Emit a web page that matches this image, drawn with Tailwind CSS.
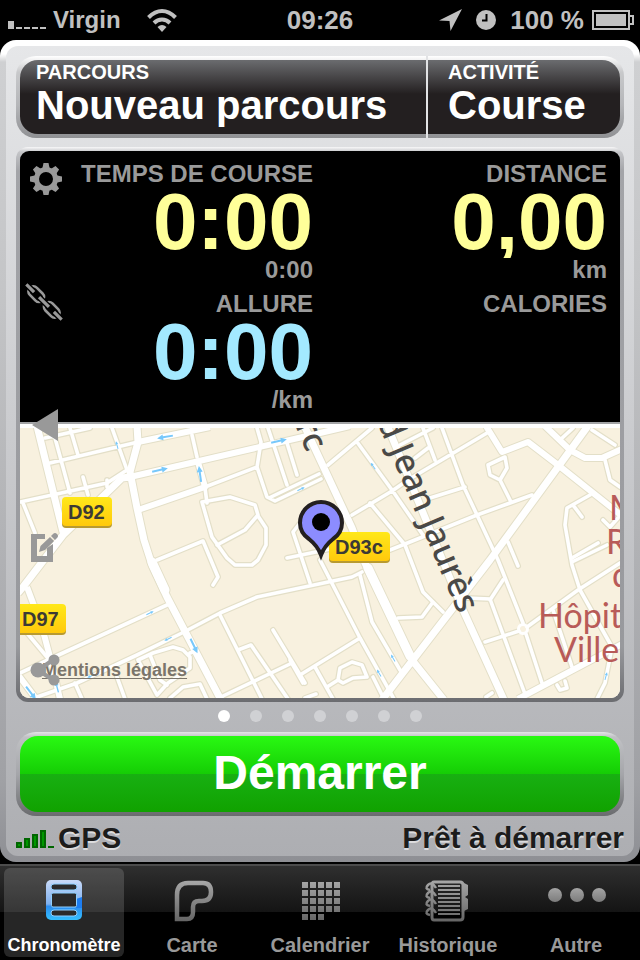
<!DOCTYPE html>
<html lang="fr">
<head>
  <meta charset="UTF-8" />
  <meta name="viewport" content="width=device-width, initial-scale=1.0"/>
  <title>Chronomètre</title>
  <script src="https://cdn.jsdelivr.net/npm/@tailwindcss/browser@4"></script>
</head>
<body class="min-h-screen flex flex-col bg-black font-['Liberation_Sans',Arial,sans-serif] font-bold">

  <!-- Status bar -->
  <header class="h-10 grid grid-cols-[1fr_auto_1fr] items-center px-2 text-[26px] text-[#c0c0c0]">
    <div class="flex items-center">
      <svg class="w-[38px] h-5 mr-[7px]" viewBox="0 0 38 20" fill="#c0c0c0">
        <path d="M0 11h6v8H0zM8 17h6v2H8zM16 17h6v2h-6zM24 17h6v2h-6zM32 17h6v2h-6z"/>
      </svg>
      <span class="text-2xl">Virgin</span>
      <svg class="w-[30px] h-6 ml-[26px]" viewBox="0 0 30 24" fill="none" stroke="#c0c0c0" stroke-width="4">
        <path d="M1.500 9.500Q8 3 15 3T28.500 9.500"/>
        <path d="M7 15Q10.500 11.500 15 11.500T23 15"/>
        <path d="M10.500 19Q15 15 19.500 19L15 24z" fill="#c0c0c0" stroke="none"/>
      </svg>
    </div>
    <span>09:26</span>
    <div class="flex items-center justify-end">
      <svg class="w-[23px] h-[22px] mr-3.5" viewBox="0 0 23 22" fill="#c0c0c0"><path d="M23 0L11.500 22L10.500 12L0 11.500z"/></svg>
      <svg class="w-5 h-5 mr-3.5" viewBox="0 0 20 20"><circle cx="10" cy="10" r="10" fill="#c0c0c0"/><path d="M10.500 4v6.500H6" fill="none" stroke="#000" stroke-width="2"/></svg>
      <span class="mr-2">100 %</span>
      <svg class="w-[42px] h-5 -mr-0.5" viewBox="0 0 42 20" fill="#c0c0c0">
        <path d="M1 1h36v18H1z" fill="none" stroke="#c0c0c0" stroke-width="2"/>
        <path d="M4 4h30v12H4z"/>
        <path d="M38 6h3v8h-3" fill="none" stroke="#c0c0c0" stroke-width="2"/>
      </svg>
    </div>
  </header>

  <main class="rounded-2xl p-1.5 bg-[linear-gradient(#fff_0,#fff_14px,#cfd0d2_22px,#c4c5c7_30%,#a0a1a5_90%,#8e8f94_100%)]">
    <div class="rounded-xl px-2.5 pt-2.5 bg-linear-to-b from-[#e6e7e9] to-[#adaeb2]">

      <!-- Route and activity -->
      <div class="relative rounded-[20px] p-1 bg-[linear-gradient(#fff_0,#c8c9cb_16px,#b5b6b9_60%,#8f9093_100%)]">
        <div class="flex h-[74px] rounded-[18px] overflow-hidden text-white bg-[linear-gradient(#6b6c6f,#231f20_46%)] [text-shadow:0_-2px_0_#000]">
          <button class="w-[408px] pl-4 pb-2 text-left">
            <span class="block text-xl leading-6">PARCOURS</span>
            <span class="block text-[40px] leading-[42px]">Nouveau parcours</span>
          </button>
          <button class="flex-1 pl-5 pb-2 text-left">
            <span class="block text-xl leading-6">ACTIVITÉ</span>
            <span class="block text-[40px] leading-[42px]">Course</span>
          </button>
        </div>
        <div class="absolute inset-y-0 left-[410px] w-0.5 bg-[#e2e3e5]"></div>
      </div>

      <!-- Stats and map -->
      <section class="relative mt-[9px] rounded-xl p-1 bg-[linear-gradient(#f8f8f9_0,#c4c5c8_5px,#a3a4a8_24px,#98999d_90%,#6b6c70_100%)]">
        <div class="rounded-[9px] overflow-hidden">
          <div class="grid grid-cols-2 bg-black pt-[11px] pb-2.5 text-right text-2xl text-[#9a9a9a]">
            <div class="pr-[7px]">
              <h2 class="leading-6">TEMPS DE COURSE</h2>
              <p class="text-[80px] leading-[72px] text-[#ffff99]">0:00</p>
              <p class="leading-6">0:00</p>
              <h2 class="leading-6 mt-2.5">ALLURE</h2>
              <p class="text-[80px] leading-[72px] text-[#a3e9ff]">0:00</p>
              <p class="leading-6">/km</p>
            </div>
            <div class="pr-[13px]">
              <h2 class="leading-6">DISTANCE</h2>
              <p class="text-[80px] leading-[72px] overflow-hidden text-[#ffff99]">0,00</p>
              <p class="leading-6">km</p>
              <h2 class="leading-6 mt-2.5">CALORIES</h2>
            </div>
          </div>

          <div class="relative border-t-2 border-[#a3a4a6] bg-white pt-1">
            <svg class="block w-full h-[270px]" viewBox="20 428 600 270" preserveAspectRatio="xMidYMid slice">
              <defs>
                <linearGradient id="badge" x1="0" y1="0" x2="0" y2="1"><stop offset="0" stop-color="#ffe81a"/><stop offset="1" stop-color="#ffc90c"/></linearGradient>
                <g id="streets" fill="none" stroke-linejoin="round" stroke-linecap="round">
                  <path d="M45 438L90 428M70 428L78 455M55 438L70 493M112 428L127 470M20 502L107 483L127 470M83 477L88 495M107 480V487M23 503L35 533M50 463L138 442M192 435L197 457M205 487L257 467M205 488L207 503M257 428L261 442L257 467L267 497L275 501L321 479M271 497L319 474M268 428L287 485M287 443L297 475"/>
                  <path d="M202 502L230 497L255 505L258 515L245 530L217 545M202 502L212 537L227 558L235 565H252L258 560L266 545V528L258 516M157 560L203 541L218 577L213 585M300 523L293 532L310 583M287 558L330 549L390 550L405 544L477 515L532 495"/>
                  <path d="M167 605L52 658L20 673M37 697L77 683L137 655L182 633L220 613L257 597L352 577L362 572M27 633L47 657M75 683L82 699M117 677L125 699M138 660L153 653L173 647L183 650L190 657V668L177 677L168 683L157 695L138 660M150 655L160 680L167 685M190 653L195 651M170 698L183 687L200 684L207 699"/>
                  <path d="M220 615L262 699M238 650L251 645L288 699M223 696L292 663M273 630L305 683M300 675L360 638M290 660L303 683M315 667L333 699M327 687L338 680L340 668L352 662L362 665L367 677L353 678L343 683L338 680M305 698L316 694M360 575L372 622L400 670M320 560L360 638L394 699M373 677L384 699"/>
                  <path d="M560 440L573 428M592 430L615 445M605 460L610 480L620 487M488 465L505 457L507 468L500 480L490 475zM500 480L511 502M442 428L463 485L498 560L523 623M526 634L542 683M423 428L435 460M400 445L433 428M415 458L428 448M413 477L487 433M430 498L465 487M328 465L372 428M357 442L392 490L423 535M352 515L392 491L405 482M370 503L405 545L423 592L443 612M398 618L422 617L433 602"/>
                  <path d="M508 542L518 566M590 495L567 508L565 525L572 565L580 590L612 647L605 683L597 699M573 505L582 517M572 558L598 543M572 562L607 545M603 520L610 527L618 518M620 563L578 590L527 627M519 631L485 642M490 600L503 580M467 598L490 599L525 694M553 610L572 667M486 697L492 693M557 685L560 690L567 688L565 681"/>
                </g>
                <g id="avenues" fill="none" stroke-linejoin="round">
                  <path stroke-width="6" d="M138 442L210 427M130 477L320 433L350 426M138 510L205 487L198 462M27 587L42 627L50 657L60 699M545 426L570 450L585 458H602L622 449M486 426L502 452L528 442L558 465L622 516M518 699L622 644M19 676L37 700"/>
                  <path stroke-width="7" d="M37 426L63 532M137 426L138 442L130 472L137 508L144 540L152 565L167 597L221 700M130 477L122 478L63 535L23 587L18 593M303 423L352 528L365 563L412 660L444 700M588 426L490 560L382 700M387 425L463 610L504 700"/>
                  <path stroke-width="9" stroke-linecap="round" d="M152 562L165 590M368 568L410 656"/>
                </g>
              </defs>
              <rect x="20" y="428" width="600" height="270" fill="#f8f1df"/>
              <g stroke="#e3dfc8"><use href="#streets" stroke-width="6"/></g>
              <g fill="none" stroke="#e3dfc8" stroke-linejoin="round">
                <path stroke-width="8" d="M138 442L210 427M130 477L320 433L350 426M138 510L205 487L198 462M27 587L42 627L50 657L60 699M545 426L570 450L585 458H602L622 449M486 426L502 452L528 442L558 465L622 516M518 699L622 644M19 676L37 700"/>
                <path stroke-width="9" d="M37 426L63 532M137 426L138 442L130 472L137 508L144 540L152 565L167 597L221 700M130 477L122 478L63 535L23 587L18 593M303 423L352 528L365 563L412 660L444 700M588 426L490 560L382 700M387 425L463 610L504 700"/>
                <path stroke-width="11" stroke-linecap="round" d="M152 562L165 590M368 568L410 656"/>
              </g>
              <circle cx="523" cy="629" r="4.500" fill="#f8f1df" stroke="#fff" stroke-width="3"/>
              <g stroke="#fff"><use href="#streets" stroke-width="3.600"/><use href="#avenues"/></g>

              <!-- one-way arrows -->
              <defs><path id="arrow" d="M-8 -1H2V-3L8 0L2 3V1H-8z"/></defs>
              <g fill="#77c8fb">
                <use href="#arrow" transform="translate(165 437) rotate(170)"/>
                <use href="#arrow" transform="translate(160 470) rotate(-12)"/>
                <use href="#arrow" transform="translate(279 441) rotate(-12)"/>
                <use href="#arrow" transform="translate(200 474) rotate(-98)"/>
                <use href="#arrow" transform="translate(117 445) rotate(-105) scale(.5)"/>
                <use href="#arrow" transform="translate(301 489) rotate(-25) scale(.5)"/>
                <use href="#arrow" transform="translate(150 613) rotate(-25) scale(.5)"/>
                <use href="#arrow" transform="translate(168 639) rotate(155) scale(.5)"/>
                <use href="#arrow" transform="translate(194 646) rotate(64)"/>
                <use href="#arrow" transform="translate(31 693) rotate(52)"/>
                <use href="#arrow" transform="translate(57 687) rotate(-105) scale(.7)"/>
                <use href="#arrow" transform="translate(91 676) rotate(155) scale(.5)"/>
                <use href="#arrow" transform="translate(373 466) rotate(-125) scale(.5)"/>
                <use href="#arrow" transform="translate(393 658) rotate(-120) scale(.5)"/>
                <use href="#arrow" transform="translate(379 673) rotate(-120) scale(.5)"/>
                <use href="#arrow" transform="translate(606 676) rotate(-75) scale(.5)"/>
              </g>

              <g class="font-['Noto_Sans',sans-serif] font-medium text-[34px]" fill="#4a4947">
                <text transform="translate(377 422) rotate(67)">d Jean Jaurès</text>
                <text transform="translate(295 425) rotate(67)">rc</text>
              </g>
              <g class="font-[Lato,sans-serif] font-normal text-[34px]" fill="#b85b58">
                <text x="609" y="520">M</text>
                <text x="606" y="554">R</text>
                <text x="612" y="587">d</text>
                <text x="538" y="628">Hôpit</text>
                <text x="554" y="662">Ville</text>
              </g>

              <g class="text-xl" fill="#3c3a35">
                <rect x="62" y="499" width="50" height="29" rx="4" fill="#b89a30"/>
                <rect x="62" y="497" width="50" height="29" rx="4" fill="url(#badge)"/>
                <text x="68" y="519">D92</text>
                <rect x="14" y="606" width="52" height="29" rx="4" fill="#b89a30"/>
                <rect x="14" y="604" width="52" height="29" rx="4" fill="url(#badge)"/>
                <text x="22" y="626">D97</text>
                <rect x="329" y="534" width="61" height="29" rx="4" fill="#b89a30"/>
                <rect x="329" y="532" width="61" height="29" rx="4" fill="url(#badge)"/>
                <text x="335" y="554">D93c</text>
              </g>
              <path d="M321 555C318 547 314 543 309 539C303 535 300 530 300 523A21 21 0 0 1 342 523C342 530 339 535 333 539C328 543 324 547 321 555z" fill="#8c8cff" stroke="#231f20" stroke-width="4"/>
              <circle cx="321" cy="522" r="9"/>
            </svg>
            <a href="#" class="absolute left-[22px] bottom-[18px] text-lg leading-5 text-[#7b756b] underline underline-offset-2 decoration-1">Mentions légales</a>
          </div>
        </div>

        <!-- Side shortcuts -->
        <div class="absolute left-3 top-4 h-[523px] flex flex-col justify-between">
          <button aria-label="Réglages" class="w-9 h-8">
            <svg class="w-9 h-8 overflow-visible" viewBox="0 0 36 32">
              <g fill="#999">
                <path id="teeth" d="M15.500 0H20.500L22 7H14zM15.500 32H20.500L22 25H14z"/>
                <use href="#teeth" transform="rotate(45 18 16)"/>
                <use href="#teeth" transform="rotate(90 18 16)"/>
                <use href="#teeth" transform="rotate(135 18 16)"/>
              </g>
              <circle cx="18" cy="16" r="9.500" fill="#000" stroke="#999" stroke-width="5"/>
            </svg>
          </button>
          <button aria-label="Capteurs" class="w-9 h-8">
            <svg class="w-9 h-8 overflow-visible" viewBox="0 0 36 32" fill="none" stroke="#999" stroke-width="2.600">
              <g transform="translate(0 -2) rotate(45 16 18)">
                <rect x="-4" y="13" width="18" height="10" rx="5"/>
                <rect x="18" y="13" width="18" height="10" rx="5"/>
                <path d="M-9 18H2M9 18H23M30 18H41" stroke="#000" stroke-width="6"/>
                <path d="M-9 18H2M9 18H23M30 18H41" stroke-width="3.200"/>
              </g>
            </svg>
          </button>
          <button aria-label="Précédent" class="w-9 h-8">
            <svg class="w-9 h-8" viewBox="0 0 36 32" fill="#999"><path d="M4 16L30 0V32z"/></svg>
          </button>
          <button aria-label="Modifier" class="w-9 h-8">
            <svg class="w-9 h-8" viewBox="0 0 36 32" fill="#999">
              <path d="M3 3H17V8H9V25H19V17L25 13V31H3z"/>
              <path d="M11 21L12.500 15L22 6L26 10L17 19zM23 5L25 3Q27 1 29 3T29 7L27 9z"/>
            </svg>
          </button>
          <button aria-label="Partager" class="w-9 h-8">
            <svg class="w-9 h-8" viewBox="0 0 36 32" fill="#999">
              <path d="M10 16L25 6M10 16L25 26" stroke="#999" stroke-width="4"/>
              <circle cx="10" cy="16" r="7.500"/><circle cx="26" cy="6" r="5.500"/><circle cx="26" cy="26" r="5.500"/>
            </svg>
          </button>
        </div>
      </section>

      <!-- Page dots -->
      <div class="flex justify-center gap-5 pt-2 pb-2.5">
        <span class="w-3 h-3 rounded-full bg-white"></span>
        <span class="w-3 h-3 rounded-full bg-[#d0d1d4]"></span>
        <span class="w-3 h-3 rounded-full bg-[#d0d1d4]"></span>
        <span class="w-3 h-3 rounded-full bg-[#d0d1d4]"></span>
        <span class="w-3 h-3 rounded-full bg-[#d0d1d4]"></span>
        <span class="w-3 h-3 rounded-full bg-[#d0d1d4]"></span>
        <span class="w-3 h-3 rounded-full bg-[#d0d1d4]"></span>
      </div>

      <div class="rounded-[20px] p-1 bg-[linear-gradient(#e4e5e7_0,#c0c1c4_5px,#a5a6aa_50%,#6a6b6e_100%)]">
        <button class="w-full h-[76px] pb-0.5 rounded-[18px] text-5xl text-white bg-[linear-gradient(#29f912,#15cd05_50%,#18b012_50%,#10a200)]">Démarrer</button>
      </div>

      <div class="h-10 pt-1 flex items-center justify-between text-[30px] leading-9 text-[#1c1c1c] [text-shadow:0_2px_0_#dcdcde]">
        <div class="flex items-center gap-1">
          <svg class="w-[38px] h-5" viewBox="0 0 38 20" fill="#009800" stroke="#006600" stroke-width="2">
            <path d="M1 15h4v4H1zM9 11h4v8H9zM17 7h4v12h-4zM25 3h4v16h-4z"/><path d="M32 19h6"/>
          </svg>
          <span>GPS</span>
        </div>
        <span>Prêt à démarrer</span>
      </div>
    </div>
  </main>

  <!-- Tab bar -->
  <nav class="flex-1 mt-0.5 grid grid-cols-5 border-t-2 border-[#4c4c4c] bg-[linear-gradient(#2f2f2f,#141414_46px,#000_46px)] text-xl leading-6 text-[#999] text-center">
    <a href="#" class="mx-1 mt-0.5 mb-1 rounded-md bg-white/15 pt-2 text-lg leading-6 text-white flex flex-col items-center">
      <svg class="w-12 h-12 mb-[9px]" viewBox="0 0 48 48">
        <defs>
          <linearGradient id="blue" x1="0" y1="0" x2="0" y2="1"><stop offset="0" stop-color="#c9daf8"/><stop offset=".6" stop-color="#7fb0ee"/><stop offset=".66" stop-color="#2b8df0"/><stop offset="1" stop-color="#35c0ff"/></linearGradient>
        </defs>
        <rect x="6" y="4" width="36" height="40" rx="5" fill="url(#blue)"/>
        <path d="M36 23L42 21V32H36z" fill="#1d7df0"/>
        <g fill="#2b2b2b" stroke="#8fd0ff">
          <rect x="11" y="8" width="26" height="6" rx="3"/><rect x="11.500" y="17" width="25" height="14" rx="1.500"/><rect x="11" y="34" width="26" height="6" rx="3"/>
        </g>
      </svg>
      Chronomètre
    </a>
    <a href="#" class="pt-2.5 flex flex-col items-center">
      <svg class="w-12 h-12 mb-[9px]" viewBox="0 0 48 48">
        <defs><linearGradient id="grey" gradientUnits="userSpaceOnUse" x1="0" y1="4" x2="0" y2="46"><stop offset="0" stop-color="#a8a8a8"/><stop offset="1" stop-color="#646464"/></linearGradient></defs>
        <path d="M9 43V19Q9 7 20 7H35Q43 7 43 16T34 25H31Q25 25 25 31V36Q25 43 19 43z" fill="none" stroke="url(#grey)" stroke-width="4.500"/>
      </svg>
      Carte
    </a>
    <a href="#" class="pt-2.5 flex flex-col items-center">
      <svg class="w-12 h-12 mb-[9px]" viewBox="0 0 48 48">
        <g fill="none" stroke="url(#grey)" stroke-width="6" stroke-dasharray="6 2">
          <path d="M6 9.010L44 9M6 17.010L44 17M6 25.010L44 25M6 33.010L44 33M6 41.010L28 41"/>
        </g>
      </svg>
      Calendrier
    </a>
    <a href="#" class="pt-2.5 flex flex-col items-center">
      <svg class="w-12 h-12 mb-[9px]" viewBox="0 0 48 48" fill="none" stroke="url(#grey)">
        <path d="M10 6H36Q39 6 39 9V41Q39 44 36 44H10Q8 44 8 41V9Q8 6 10 6z" stroke-width="3"/>
        <path d="M40 7L44 9V19L41 21L44 23V33L40 35z" fill="url(#grey)" stroke="none"/>
        <path d="M14 10.010L36 10M14 14.010L36 14M14 18.010L36 18M14 22.010L36 22M14 26.010L36 26M14 30.010L36 30M14 34.010L36 34M14 38.010L36 38" stroke-width="2"/>
        <path d="M12 12Q8 5 4 9T6 14M12 20Q8 13 4 17T6 22M12 28Q8 21 4 25T6 30M12 37Q8 30 4 34T6 39" stroke-width="2.500"/>
      </svg>
      Historique
    </a>
    <a href="#" class="pt-2.5 flex flex-col items-center">
      <svg class="w-16 h-12 mb-[9px]" viewBox="0 0 64 48">
        <defs><linearGradient id="dot" x1="0" y1="0" x2="0" y2="1"><stop offset="0" stop-color="#a4a4a4"/><stop offset="1" stop-color="#7c7c7c"/></linearGradient></defs>
        <g fill="url(#dot)"><circle cx="11" cy="19" r="7"/><circle cx="33" cy="19" r="7"/><circle cx="55" cy="19" r="7"/></g>
      </svg>
      Autre
    </a>
  </nav>
</body>
</html>
